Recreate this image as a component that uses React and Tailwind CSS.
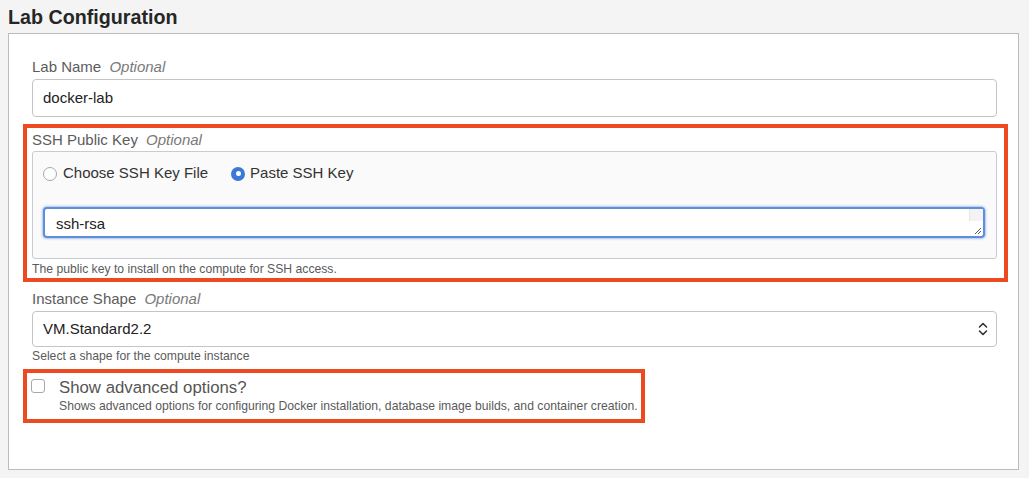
import React from "react";

const font = { fontFamily: '"Liberation Sans", Arial, sans-serif' };

export default function App() {
  return (
    <div className="w-[1029px] h-[478px] bg-[#f4f4f4] overflow-hidden" style={font}>
      <h2 className="h-[33px] pl-2 pt-[6px] text-[19.7px] leading-[23px] font-bold text-[#262626]">
        Lab Configuration
      </h2>
      <div className="ml-2 w-[1011px] h-[437px] bg-white border border-[#bcbcbc] pl-[23px] pr-[21px] pt-[25px]">
        {/* Lab Name */}
        <div className="text-[15px] leading-[16px] text-[#5c5c5c]">
          Lab Name <span className="italic text-[#7a7a7a] ml-[4px]">Optional</span>
        </div>
        <div className="mt-[4px] h-[38px] border border-[#c4c4c4] rounded-[4px] flex items-center pl-[10px] text-[15px] text-[#222]">
          docker-lab
        </div>

        {/* SSH Key */}
        <div className="relative mt-[15px]">
          <span className="absolute -left-[9px] -right-[11px] -top-[8px] -bottom-[6px] border-4 border-[#ee4a22] pointer-events-none" />
          <div className="text-[15px] leading-[16px] text-[#5c5c5c]">
            SSH Public Key <span className="italic text-[#7a7a7a] ml-[4px]">Optional</span>
          </div>
          <div className="mt-[3px] h-[108px] bg-[#fafafa] border border-[#c8ccd2] rounded-[3px] pl-[10px] pr-[11px] pt-[13px]">
            <div className="flex items-center h-[17px] text-[15px] text-[#333]">
              <span className="w-[14px] h-[14px] rounded-full border border-[#a8a8a8] bg-white" />
              <span className="ml-[6px]">Choose SSH Key File</span>
              <span className="ml-[23px] w-[14px] h-[14px] rounded-full bg-[#3b78d7] flex items-center justify-center">
                <span className="w-[5px] h-[5px] rounded-full bg-white" />
              </span>
              <span className="ml-[5px]">Paste SSH Key</span>
            </div>
            <div className="mt-[25px] h-[31px] border-2 border-[#5f8fdc] rounded-[4px] bg-white shadow-[0_0_2px_1px_rgba(95,143,220,0.5)] flex items-center relative">
              <span className="ml-[11px] mt-[4px] text-[15px] text-[#222]">ssh-rsa</span>
              <span className="absolute right-0 top-0 w-[14px] h-[12px] bg-[#f3f3f3] border-l border-[#e6e6e6]" />
              <svg className="absolute right-[1px] bottom-[1px]" width="9" height="9" viewBox="0 0 9 9">
                <path d="M8 2L2 8M8 5L5 8" stroke="#555" strokeWidth="1" />
              </svg>
            </div>
          </div>
          <div className="mt-[3px] text-[12.2px] leading-[14px] text-[#5a5a5a]">
            The public key to install on the compute for SSH access.
          </div>
        </div>

        {/* Instance Shape */}
        <div className="mt-[15px] text-[15px] leading-[16px] text-[#5c5c5c]">
          Instance Shape <span className="italic text-[#7a7a7a] ml-[4px]">Optional</span>
        </div>
        <div className="mt-[4px] h-[36px] border border-[#c4c4c4] rounded-[4px] flex items-center justify-between pl-[10px] pr-[8px] text-[15px] text-[#222]">
          <span>VM.Standard2.2</span>
          <svg width="10" height="16" viewBox="0 0 10 16">
            <path d="M1.5 6L5 2.5L8.5 6M1.5 10L5 13.5L8.5 10" fill="none" stroke="#333" strokeWidth="1.6" strokeLinecap="round" strokeLinejoin="round" />
          </svg>
        </div>
        <div className="mt-[2px] text-[12.2px] leading-[14px] text-[#5a5a5a]">
          Select a shape for the compute instance
        </div>

        {/* Advanced */}
        <div className="relative mt-[6px] h-[54px]">
          <span className="absolute -left-[9px] top-0 w-[622px] h-[54px] border-4 border-[#ee4a22] pointer-events-none" />
          <div className="flex items-start pt-[10px] -ml-[1px]">
            <span className="w-[14px] h-[14px] rounded-[3px] border border-[#a8a8a8] bg-white shrink-0" />
            <div className="ml-[14px] -mt-[1px]">
              <div className="text-[16.8px] leading-[19px] text-[#555]">Show advanced options?</div>
              <div className="mt-[2px] text-[12.2px] leading-[14px] text-[#5a5a5a]">
                Shows advanced options for configuring Docker installation, database image builds, and container creation.
              </div>
            </div>
          </div>
        </div>
      </div>
    </div>
  );
}
